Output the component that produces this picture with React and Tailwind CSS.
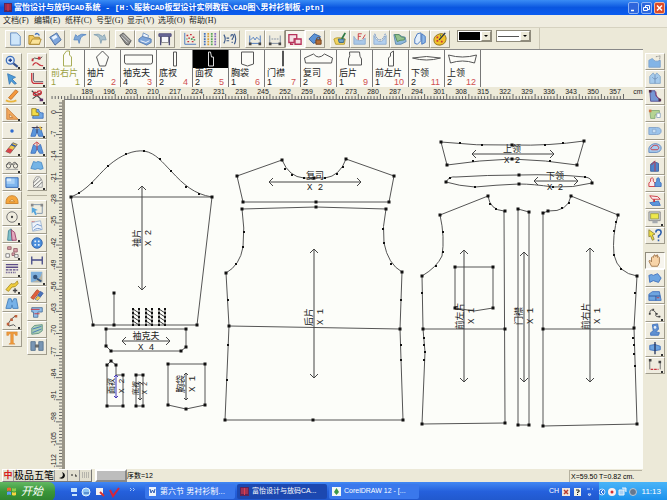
import { clsx } from 'clsx';

const B = '#3f70bd'; // outline blue
const L = '#8db8e8'; // fill blue
const K = '#444';
const R = '#c8323c';

const ICONS = {
  new: <path d="M3 1h7l4 4v10H3z" fill="#cfe6fa" stroke="#5b87c0" />,
  open: (
    <>
      <path d="M1 14V4h5l1 2h6v8z" fill="#f0c860" stroke="#a8842c" />
      <path d="M2 14l3-6h10l-2 6z" fill="#fbe49a" stroke="#a8842c" />
      <path d="M8 3q3-3 5 1" fill="none" stroke={B} strokeWidth="1.5" />
    </>
  ),
  save: (
    <>
      <path d="M2 6l8-5 5 8-7 6z" fill="#7fa6dc" stroke="#44679c" />
      <path d="M4 6l5-3 2 3-5 3z" fill="#e8f2fc" />
    </>
  ),
  undo: <path d="M1 9l2-6 2 2q5-4 10-2-6 1-7 6l-1 4-1-4z" fill="#7fa8d8" stroke="#5f8bc2" />,
  redo: <path d="M15 9l-2-6-2 2Q6 1 1 3q6 1 7 6l1 4 1-4z" fill="#a9c0cc" stroke="#86a2b2" />,
  mouse: (
    <>
      <path d="M2 4l4-3 9 9-3 5-3-1z" fill="#8a8a88" stroke="#555" />
      <path d="M4 5l7 7M6 3l7 7" stroke="#ddd" />
    </>
  ),
  printer: (
    <>
      <path d="M6 1l6 3-1 4-6-2z" fill="#eef5fd" stroke="#6c8fbd" />
      <path d="M1 8l4-3 10 3v4l-5 3-9-4z" fill="#7da5da" stroke="#5579ad" />
      <path d="M3 10l6 2 4-2" stroke="#fff" fill="none" />
    </>
  ),
  plotter: (
    <>
      <path d="M4 4h8v8H4z" fill="#f7f7fb" stroke="#888" />
      <path d="M1 2h14v3H1z" fill="#6b6a9a" stroke="#4d4c78" />
      <path d="M3 5v10M13 5v10" stroke="#4d4c78" strokeWidth="1.5" />
    </>
  ),
  scatter: (
    <>
      <path d="M2 1v13h13" fill="none" stroke={B} />
      <path d="M4 4h2M8 3h2M6 7h2M11 6h2M5 11h2M10 11h2" stroke={R} strokeWidth="1.5" />
      <path d="M9 8h2M12 9h2M4 8h1" stroke="#2f8a4a" strokeWidth="1.5" />
    </>
  ),
  grid: (
    <g fill="none" strokeWidth="2" strokeDasharray="2 1">
      <path d="M2 1v14" stroke={B} />
      <path d="M6 1v14" stroke="#d8a13a" />
      <path d="M10 1v14" stroke="#57a457" />
      <path d="M14 1v14" stroke="#8a6cc0" />
    </g>
  ),
  formula: (
    <g fill="none" stroke="#3c5888" strokeWidth="1.3">
      <path d="M1 3q3 5 0 10M4 7h3M4 10h3M13 2q3 6 0 12" />
      <path d="M9 5q0-2 1.5-2t1.5 2q0 1-1.5 3v1M10.500 11v1.5" />
    </g>
  ),
  measureA: (
    <>
      <path d="M2 4v9h12V4" fill="none" stroke={B} />
      <path d="M3 9l3-3 2 3 2-3 3 3" fill="none" stroke={B} />
      <path d="M1 12h3v3H1zM12 12h3v3h-3z" fill={K} />
    </>
  ),
  measureB: (
    <>
      <path d="M2 4v9M14 4v9M3 13h10" fill="none" stroke="#75859c" />
      <path d="M4 8h8" stroke="#75859c" strokeDasharray="2 1" />
      <path d="M1 12h3v3H1zM12 12h3v3h-3z" fill={K} />
    </>
  ),
  pieces: (
    <g fill="#f6dfe4" stroke="#b8325a" strokeWidth="1.5">
      <path d="M1 3h9v5H7v4H1z" />
      <path d="M8 8h7v6H8z" />
      <path d="M3 12v2h3" fill="none" />
    </g>
  ),
  lock: (
    <>
      <path d="M1 8l6-6 7 3-2 6-6 2z" fill="#5c93d6" stroke="#2d5c9c" />
      <path d="M9 9h6v5H9z" fill="#b5713a" stroke="#6e3f18" />
      <path d="M10 9V7q2-2 4 0v2" fill="none" stroke="#6e3f18" />
    </>
  ),
  bucket: (
    <>
      <path d="M1 8q4-3 13 0l-1 6H3z" fill="#f2d460" stroke="#b59a30" />
      <path d="M6 8h7l-1 4H7z" fill="#6fa2c8" stroke="#34658c" />
      <path d="M10 8l4-7" stroke="#2f7a46" strokeWidth="2" />
    </>
  ),
  curveF: (
    <>
      <path d="M1 5q2 5 6 5t7-3v7H1z" fill="#a9c8e8" stroke="#8faccf" />
      <path d="M6 9V2h4M6 5h3M11 8l3-5" fill="none" stroke={R} />
    </>
  ),
  curveU: (
    <>
      <path d="M1 4q3 7 7 7t7-7v10H1z" fill="#b3d0ef" stroke="#8faccf" />
      <path d="M2 2q2 7 6 7t6-7" fill="none" stroke={B} strokeDasharray="2 1" />
    </>
  ),
  clouds: (
    <>
      <path d="M1 3h6q3 3 7 3l1 5-6 3H3z" fill="#8fb8dc" stroke="#5d87ab" />
      <path d="M2 3h5q2 4 6 3v3q-6 0-8 2z" fill="#94c28e" stroke="#55895a" />
    </>
  ),
  mirror: (
    <>
      <path d="M2 8l3-6 4-1v9l-4 4-3-1z" fill="#e4effb" stroke={B} />
      <path d="M10 2l4 3v7l-4 2z" fill={L} stroke={B} />
    </>
  ),
  palette: (
    <>
      <path d="M8 2q6-1 7 5 0 7-7 8-7 0-7-6 0-5 7-7z" fill="#f0c22c" stroke="#8b6f20" />
      <path d="M4 6h2M4 10h2M9 11h2" stroke={R} strokeWidth="2" />
      <path d="M7 9l7-8" stroke="#22304c" strokeWidth="1.5" />
      <path d="M8 4h1" stroke="#308040" strokeWidth="2" />
    </>
  ),
  zoom: (
    <>
      <circle cx="6" cy="6" r="4.5" fill="#dbe9fa" stroke={B} strokeWidth="1.5" />
      <path d="M4 6h4M6 4v4" stroke="#1d3c86" strokeWidth="1.5" />
      <path d="M9.500 9.500l5 4" stroke="#34508c" strokeWidth="2.5" />
    </>
  ),
  pointer: <path d="M3 2l9 4-4 2 5 5-2 1-4-4-2 4z" fill="#4d9cd8" stroke="#3a7ab8" />,
  pencil: (
    <>
      <path d="M4 10L12 1l3 2-8 9z" fill="#f5973a" stroke="#c0742c" />
      <path d="M1 13q6 3 12 0" stroke="#e9b43c" strokeWidth="2" fill="none" />
    </>
  ),
  triangle: (
    <>
      <path d="M2 1v13h13z" fill="#f2a85c" stroke="#c88040" />
      <path d="M5 8v4h4z" fill="#ece9d8" stroke="#c88040" />
    </>
  ),
  point: <circle cx="8" cy="8" r="2" fill="#2d6ad0" />,
  eraser: (
    <>
      <path d="M1 12l8-10 5 2-8 10z" fill="#f2c94a" stroke="#666" />
      <path d="M1 12l3-4 5 2-3 4z" fill="#d8444c" />
      <path d="M7 4l5 2" stroke="#345aa8" strokeWidth="2" />
    </>
  ),
  glasses: (
    <g fill="none" stroke="#555">
      <path d="M2 8q2-5 5-2l1 2 1-2q3-3 5 2" />
      <circle cx="4" cy="9" r="2.5" />
      <circle cx="12" cy="9" r="2.5" />
      <path d="M1 13h14" stroke="#999" />
    </g>
  ),
  rect: (
    <>
      <path d="M1 2h14v11H1z" fill="#7fb6ee" stroke="#2a5fae" />
      <path d="M2 3h9v6H2z" fill="#a9d0f5" />
      <path d="M2 3h5v3H2z" fill="#d8ebfc" />
    </>
  ),
  protractor: (
    <>
      <path d="M1 12q0-9 7-9t7 9z" fill="#f5a63c" stroke="#c8802c" />
      <path d="M5 10q3-5 6 0z" fill="#fbe4b8" stroke="#c8802c" />
    </>
  ),
  circle: (
    <>
      <circle cx="8" cy="8" r="6" fill="none" stroke="#666" />
      <circle cx="8" cy="8" r="1.3" fill={K} />
    </>
  ),
  skirt: (
    <>
      <path d="M4 3l3-2 2 8v5H3z" fill="#7fc0c8" stroke="#458698" />
      <path d="M7 2l4 3 2 9H8z" fill="#e4a8bc" stroke="#963a66" />
    </>
  ),
  squares: (
    <>
      <path d="M3 2h4v3H3zM10 4h4v4h-4zM8 9h3v3H8z" fill="#d8a0a8" stroke="#95606a" />
      <path d="M1 10h4v4H1zM11 11h4v3h-4z" fill="#fff" stroke="#777" />
    </>
  ),
  lines: (
    <g stroke="#5d4d88" strokeWidth="1.5">
      <path d="M1 3h14M1 6h14" />
      <path d="M1 9h14" strokeDasharray="3 1" />
      <path d="M1 12h11" strokeDasharray="1 1" />
    </g>
  ),
  tape: (
    <>
      <path d="M1 11l6-7q4 2 7-3l1 3q-3 5-7 4l-4 5z" fill="#f0cd3c" stroke="#ac902c" />
      <path d="M9 12h5M11.500 9.500v5" stroke={K} strokeWidth="1.5" />
    </>
  ),
  pants: <path d="M1 13L4 2h3l1 4 2-4h3l2 11H9L8 9l-1 4z" fill="#77b2e8" stroke="#437eba" />,
  pen: (
    <>
      <path d="M12 2L7 6l-4 6q1 3 4 1t5 1" fill="none" stroke={K} />
      <path d="M6 5h3v3H6zM2 10h3v3H2zM11 1h3v3h-3z" fill="#c0603c" />
    </>
  ),
  text: <path d="M2 1h12v4h-2l-1-2H9.500v10l2 2h-7l2-2V3H5L4 5H2z" fill="#ef9a3c" stroke="#d08030" strokeWidth=".5" />,
  wave: (
    <>
      <path d="M2 6q3-4 6-2t6-2" fill="none" stroke={K} />
      <path d="M3 12q3-5 6-2t6 2" fill="none" stroke={R} strokeWidth="1.3" />
      <path d="M9 2h3v3H9zM2 4h2v3H2z" fill={R} />
    </>
  ),
  corner: (
    <>
      <path d="M2 1v8q0 4 4 4h9" fill="none" stroke={R} strokeWidth="1.5" />
      <path d="M4 1v8q0 2 2 2h9" fill="none" stroke="#556" />
    </>
  ),
  scissors: (
    <>
      <path d="M2 2l11 10M3 11l10-7" stroke="#444" strokeWidth="1.3" />
      <path d="M8 3q5-2 5 1t-5 3q-5 1-4-2t8 1" fill="none" stroke={R} strokeWidth="1.5" />
      <path d="M11 11h4v3h-4z" fill="#5a2d68" />
    </>
  ),
  notchA: (
    <>
      <path d="M5 4h5q0 4 5 4v6H3z" fill="#6fa6e4" stroke={B} />
      <path d="M2 3h5v4l3 1v3H2z" fill="#f3dc48" stroke="#96802c" />
    </>
  ),
  notchB: (
    <>
      <path d="M1 14L4 4l4 3 4-3 3 10h-5L8 9l-2 5z" fill="#5a96dc" stroke={B} />
      <path d="M2 4h12M8 2v8" stroke="#38304c" />
      <path d="M11 3l2 4" stroke="#e2b43a" strokeWidth="2" />
    </>
  ),
  notchC: (
    <>
      <path d="M1 14L4 4l4 3 4-3 3 10h-4L8 9l-2 5z" fill="#5a96dc" stroke={B} />
      <path d="M4 4l4-3 3 3M8 2v8" stroke={R} fill="none" />
    </>
  ),
  pleat: <path d="M1 12L4 4l3 1 2-1 4 1 2 7-3 1-3-1-3 1z" fill="#74b4e6" stroke="#4a89c4" />,
  hatch: (
    <>
      <path d="M4 14V7l3-5h4l3 5v7z" fill="#f3f3ee" stroke="#999" />
      <path d="M4 9l6-6M4 13l9-8M8 14l6-6" stroke="#666" />
    </>
  ),
  frame: (
    <>
      <path d="M2 3h12v10H8" fill="none" stroke="#7a90a8" />
      <path d="M1 2h3v3H1zM12 2h3v3h-3z" fill="#888" />
      <path d="M2 6l7 3-3 1 2 4-2 1-2-4-2 2z" fill="#57a6dc" />
    </>
  ),
  patch: (
    <>
      <path d="M2 4l10-2 2 10-11 2z" fill="#eef3fa" stroke="#a0b6d0" />
      <path d="M4 10l4-4 5 2M4 13q5-4 9-1" fill="none" stroke="#6a92cc" />
      <path d="M2 3h4" stroke={R} strokeDasharray="1 1" />
    </>
  ),
  button: (
    <>
      <circle cx="8" cy="8" r="6" fill="#4a8edc" stroke="#2f5fa8" />
      <path d="M5 5h2v2H5zM9 5h2v2H9zM5 9h2v2H5zM9 9h2v2H9z" fill="#e6f1fc" />
    </>
  ),
  dart: (
    <g stroke="#464a88" strokeWidth="1.5">
      <path d="M2 4v9M14 4v9M2 8h12" />
    </g>
  ),
  camera: (
    <>
      <path d="M1 2h13v12H1z" fill="#7fb0dc" />
      <path d="M14 2Q12 13 1 14h13z" fill="#b9b4a2" />
      <circle cx="6" cy="8" r="2.5" fill="#34547c" />
      <path d="M8 10l5 3" stroke="#34547c" strokeWidth="2" />
    </>
  ),
  crayons: (
    <>
      <path d="M1 11l7-9 3 2-7 9z" fill="#e2603c" stroke="#b05030" />
      <path d="M6 13l6-9 3 2-6 8z" fill="#4a74bc" stroke="#3c5ca0" />
      <path d="M6 13l3-4 3 2-3 3z" fill="#f0cb50" />
    </>
  ),
  fold: (
    <>
      <path d="M2 3h12v5H9v6H4V8H2z" fill="#8fbbe8" stroke="#50749c" />
      <path d="M1 5h10M5 10h6" stroke={R} />
    </>
  ),
  seam: (
    <>
      <path d="M2 7l3-3 9-1v7l-4 3-8 1z" fill="#a9cfb4" stroke="#5f9080" />
      <path d="M3 8l10-3M3 12l10-4" stroke={B} />
    </>
  ),
  join: (
    <>
      <path d="M1 3h5v10H1zM10 3h5v10h-5z" fill="#7996b4" stroke="#5a7690" />
      <path d="M6 8h4M7 6v4M9 6v4" stroke={K} />
    </>
  ),
  sleeveCut: (
    <>
      <path d="M1 6l4-2q3 5 9 2v8H1z" fill="#82b4e6" stroke="#7fa4cc" />
      <path d="M9 2l5-1-1 5" fill="none" stroke="#666" strokeDasharray="1 1" />
    </>
  ),
  vest: (
    <>
      <path d="M2 5l4-4 2 3 2-3 4 4v8H2z" fill="#a6cbec" stroke="#84a6c8" />
      <path d="M8 4v9M5 6q3 4 6 0" fill="none" stroke="#6f90b8" />
    </>
  ),
  boot: (
    <>
      <path d="M2 2h6l1 6 5 4v2H3z" fill="#7696d4" stroke="#544c90" />
      <path d="M9 3q0 7 5 9" fill="none" stroke="#8c3468" />
      <path d="M1 1h3v3H1zM12 11h3v3h-3z" fill="#553048" />
    </>
  ),
  green: (
    <>
      <path d="M2 4h11v5H8v4H3z" fill="#b5d493" stroke="#86ac78" />
      <path d="M10 7h4v5h-4z" fill="#fff" stroke="#90a8c0" />
      <path d="M1 3h3v3H1z" fill="#d0784c" />
    </>
  ),
  tag: (
    <>
      <path d="M1 4h9q5 0 5 4t-5 4H1z" fill="#9cc4ec" stroke="#7fa0c8" />
      <path d="M5 6h4v4H5z" fill="#c8dff5" stroke="#8dacd0" />
    </>
  ),
  tagRed: (
    <>
      <path d="M1 8q2-5 8-5 6 1 6 5t-5 5H1z" fill="#a9cdf0" stroke="#5b83bc" />
      <path d="M3 9q2-5 7-4 4 2 1 5H4z" fill="none" stroke={R} />
    </>
  ),
  bodice: (
    <>
      <path d="M3 14V6l4-3 5 2v9z" fill="#4e84cc" stroke="#3860a0" />
      <path d="M8 3v11M4 7l4-5" stroke={R} />
    </>
  ),
  twins: (
    <>
      <path d="M1 12V8l2-2V3q2-2 3 0v3l2 2v4z" fill="#fbeaec" stroke={R} />
      <path d="M8 12V8l2-2V3q2-2 3 0v3l2 2v4z" fill="#5c98dc" stroke={B} />
    </>
  ),
  swap: (
    <>
      <path d="M2 2l9 1 3 3H5z" fill="#fbeaec" stroke={R} />
      <path d="M2 10l10-2 2 5H5z" fill="#5c98dc" stroke={B} />
      <path d="M7 6v3" stroke={R} strokeWidth="2" />
    </>
  ),
  monitor: (
    <>
      <path d="M1 1h13v10H1z" fill="#c9cfd4" stroke="#888" />
      <path d="M3 3h9v6H3z" fill="#eee84a" stroke="#a0a048" />
      <path d="M5 11h6v3H5z" fill="#a5aab0" />
    </>
  ),
  help: (
    <>
      <path d="M1 2l7 5-3 1 2 5-2 1-2-5-2 1z" fill="#f0e03c" stroke="#8e8440" />
      <path d="M9 5q0-3 3-3t3 3q0 2-3 4v2M12 13v2" fill="none" stroke="#2c5fae" strokeWidth="1.8" />
    </>
  ),
  hand: (
    <path
      d="M4 14L1 8l1-1 2 2V4l1-1 1 1 1-3h1l1 2 1-2h1v3l1-1 1 1v6l-2 4z"
      fill="#f8d4a8"
      stroke="#a07448"
    />
  ),
  bone: <path d="M1 5l3-1 2 1 5-2 4 5-3 5-6-2-4 2z" fill="#6ea5e0" stroke={B} />,
  box: (
    <>
      <path d="M1 13V6l4-3h8l2 10z" fill="#6ea5e0" stroke={B} />
      <path d="M1 8h13M9 8v5" stroke="#2f5698" />
      <path d="M10 10h3" stroke={R} />
    </>
  ),
  curvePts: (
    <>
      <path d="M2 9q0-6 4-4t3 5 5 2" fill="none" stroke={K} />
      <path d="M1 8h2v2H1zM5 3h2v2H5zM9 8h2v2H9zM12 11h2v2h-2z" fill={K} />
    </>
  ),
  rotate: (
    <>
      <path d="M5 2l6-1 1 6-3 3 4 1-1 3H3v-3l3-2z" fill="#6090d0" stroke={B} />
      <circle cx="8" cy="5" r="1.5" fill="#e7f0fb" />
    </>
  ),
  cross: (
    <>
      <path d="M2 5l6-1 6 2v4l-6 1-6-1z" fill="#6ea5e0" stroke={B} />
      <path d="M8 1v14" stroke="#24335c" strokeWidth="1.5" />
    </>
  ),
  angle: (
    <>
      <path d="M2 2v11M14 4v9" fill="none" stroke="#666" />
      <path d="M3 13h9" stroke={R} strokeWidth="1.5" strokeDasharray="3 1" />
      <path d="M1 1h3v3H1zM12 3h3v3h-3z" fill={K} />
    </>
  ),
};

const MENUS = ['文档(F)', '编辑(E)', '纸样(C)', '号型(G)', '显示(V)', '选项(O)', '帮助(H)'];

const TOP_GROUPS = [
  ['new', 'open', 'save'],
  ['undo', 'redo'],
  ['mouse', 'printer', 'plotter'],
  ['scatter', 'grid', 'formula'],
  ['measureA', 'measureB', 'pieces', 'lock'],
  ['bucket', 'curveF', 'curveU', 'clouds', 'mirror', 'palette'],
];

const LEFT_A = [
  'zoom', 'pointer', 'pencil', 'triangle', 'point', 'eraser', 'glasses', 'rect', 'protractor',
  'circle', 'skirt', 'squares', 'lines', 'tape', 'pants', 'pen', 'text',
];
const LEFT_B1 = ['wave', 'corner', 'scissors', 'notchA', 'notchB', 'notchC', 'pleat', 'hatch'];
const LEFT_B2 = ['frame', 'patch', 'button', 'dart', 'camera', 'crayons', 'fold', 'seam', 'join'];
const RIGHT_A = [
  'sleeveCut', 'vest', 'boot', 'green', 'tag', 'tagRed', 'bodice', 'twins', 'swap', 'monitor', 'help',
];
const RIGHT_B = ['hand', 'bone', 'box', 'curvePts', 'rotate', 'cross', 'angle'];

// tools that open a fly-out
const FLYOUT = new Set([
  'zoom', 'triangle', 'eraser', 'glasses', 'rect', 'circle', 'skirt', 'squares', 'lines', 'tape',
  'pen', 'wave', 'corner', 'scissors', 'notchB', 'notchC', 'hatch', 'camera', 'monitor',
  'curvePts', 'cross', 'angle',
]);

const PIECES = [
  { name: '前右片', count: 1, d: 'M14 16V5l3-4h3v4l2 2v9z' },
  { name: '袖片', count: 2, d: 'M11 7l6-6 6 6-3 9h-6z' },
  { name: '袖克夫', count: 4, d: 'M3 5h28v7q0 2-2 2H5q-2 0-2-2z' },
  { name: '底衩', count: 2, d: 'M16 2h3v14h-3z' },
  { name: '面衩', count: 2, d: 'M15 2h2l1 5h2v9h-5z' },
  { name: '胸袋', count: 1, d: 'M12 2h12v12l-6 2-6-2z' },
  { name: '门襟', count: 1, d: 'M17 1h1v15h-1z' },
  { name: '复司', count: 2, d: 'M3 8l9-4q5 6 11 0l8 4-1 5H4z' },
  { name: '后片', count: 1, d: 'M12 2h10q0 5 2 7v6H11V9q2-3 1-7z' },
  { name: '前左片', count: 1, d: 'M15 16V8l2-2V3l3-2v15z' },
  { name: '下领', count: 2, d: 'M3 8q14-3 28 0-14 4-28 0z' },
  { name: '上领', count: 2, d: 'M3 5q14 4 28 0l-2 8q-12-4-24 0z' },
];

function Icon({ name }) {
  return (
    <svg viewBox="0 0 16 16" className="h-3.5 w-4" fill="none" aria-hidden="true">
      {ICONS[name]}
    </svg>
  );
}

function ToolButton({ name, pressed, className }) {
  return (
    <button
      type="button"
      aria-label={name}
      className={clsx(
        'flex items-center justify-center border',
        pressed
          ? 'border-t-[#8f8b7c] border-l-[#8f8b7c] border-r-white border-b-white bg-[#f7f5ee]'
          : 'border-t-white border-l-white border-r-[#a09c8c] border-b-[#a09c8c] bg-[#efecdf]',
        className,
      )}
    >
      <Icon name={name} />
      {FLYOUT.has(name) && <span className="-ml-0.5 h-0.5 w-0.5 self-end bg-[#333]" />}
    </button>
  );
}

function ToolColumn({ names, className }) {
  return (
    <div className={clsx('flex w-5 flex-col', className)}>
      {names.map((n) => (
        <ToolButton key={n} name={n} pressed={n === 'hand'} className="min-h-0 flex-1" />
      ))}
    </div>
  );
}

function DropArrow() {
  return (
    <span className="flex w-2.5 items-center justify-center border border-t-white border-l-white border-r-[#8f8b7c] border-b-[#8f8b7c] bg-[#ece9d8]">
      <svg viewBox="0 0 4 2" className="h-0.5 w-1" aria-hidden="true">
        <path d="M0 0h4L2 2z" fill="#000" />
      </svg>
    </span>
  );
}

function PieceCell({ piece, index }) {
  const selected = index === 4;
  const placed = index === 0;
  return (
    <div
      className={clsx(
        'flex w-9 flex-col border-r border-[#777]',
        placed ? 'text-[#9aa040]' : 'text-[#222]',
      )}
    >
      <svg
        viewBox="0 0 34 18"
        className={clsx('h-[18px] w-full', selected && 'bg-black')}
        aria-hidden="true"
      >
        <path
          d={piece.d}
          fill="none"
          stroke={placed ? '#a8ad58' : selected ? '#ddd' : '#555'}
          strokeWidth="1"
        />
      </svg>
      <span className="pl-0.5 text-[9px] leading-[11px]">{piece.name}</span>
      <span className="flex justify-between pr-1 pl-0.5 text-[9px] leading-[7px]">
        <span>{piece.count}</span>
        <span className={placed ? '' : 'text-[#d05050]'}>{index + 1}</span>
      </span>
    </div>
  );
}

const CM = 22.1 / 7;

function TopRuler() {
  const ticks = Array.from({ length: 182 }, (_, i) => i);
  return (
    <svg className="h-[13px] w-full" aria-hidden="true">
      {ticks.map((i) => {
        const x = 22 + (i - 6) * CM;
        return (
          <path key={i} d={`M${x} 12V${(i - 6) % 7 === 0 ? 7 : 9}`} stroke="#666" strokeWidth="1" />
        );
      })}
      {Array.from({ length: 25 }, (_, i) => (
        <text key={i} x={38 + i * 22} y="7" textAnchor="middle" fontSize="7" fill="#222">
          {189 + i * 7}
        </text>
      ))}
      <text x="589" y="7" textAnchor="middle" fontSize="7" fill="#222">
        cm
      </text>
      <path d="M15 12.500H594" stroke="#777" />
    </svg>
  );
}

function SideRuler() {
  return (
    <svg className="min-h-[369px] w-full flex-1" aria-hidden="true">
      {Array.from({ length: 118 }, (_, i) => {
        const y = 3 + i * CM;
        return <path key={i} d={`M13 ${y}H${(i - 3) % 7 === 0 ? 7 : 10}`} stroke="#666" />;
      })}
      {Array.from({ length: 17 }, (_, i) => (
        <text
          key={i}
          transform={`translate(7 ${12 + i * 21.8}) rotate(-90)`}
          textAnchor="middle"
          fontSize="7"
          fill="#222"
        >
          {i === 0 ? '0' : `-${i * 7}`}
        </text>
      ))}
    </svg>
  );
}

function Dots({ points, size = 3 }) {
  return points.map(([x, y]) => (
    <rect key={`${x}-${y}`} x={x - size / 2} y={y - size / 2} width={size} height={size} fill="#111" />
  ));
}

// grain line with open arrow heads at both ends
function Grain({ x1, y1, x2, y2, color = '#444', head = 4 }) {
  const d =
    x1 === x2
      ? `M${x1} ${y1}V${y2}M${x1 - head} ${y1 + head}L${x1} ${y1}l${head} ${head}M${x1 - head} ${y2 - head}L${x1} ${y2}l${head} ${-head}`
      : `M${x1} ${y1}H${x2}M${x1 + head} ${y1 - head}L${x1} ${y1}l${head} ${head}M${x2 - head} ${y1 - head}L${x2} ${y1}l${-head} ${head}`;
  return <path d={d} fill="none" stroke={color} />;
}

function Tag({ x, y, name, count, vertical, size = 9, gap = 11 }) {
  return (
    <g
      transform={`translate(${x} ${y})${vertical ? ' rotate(-90)' : ''}`}
      textAnchor="middle"
      fontSize={size}
      fill="#222"
    >
      <text y="-2">{name}</text>
      <text y={gap - 2}>X {count}</text>
    </g>
  );
}

const OUTLINES = [
  // sleeve
  'M71 197C88 190 96 177 108 166C122 154 134 150 144 151C156 153 163 163 171 171C184 185 194 194 212 197L197 325H93zM71 197H212M114 293V325',
  // cuff
  'M106 329H186V347L181 351H111L106 346z',
  // plackets
  'M107 365L111 361L116 365V375H123V406H107zM136 375H143V406H136z',
  // pocket
  'M168 364H205V405L186 409L168 405z',
  // yoke
  'M237 176L282 160Q289 177 304 178H325Q340 176 346 159L394 176L389 202H243z',
  // back
  'M242 209L316 207L386 209Q382 227 384 243Q388 264 402 272L400 329L403 420H225L229 326L226 273Q240 265 243 247Q245 228 242 209M229 326L400 329',
  // collar
  'M441 142Q477 146 512 145Q550 146 584 141L577 165Q546 160 512 159Q480 160 447 165z',
  // collar stand
  'M446 182Q449 176 456 177Q487 175 519 175Q556 174 585 177Q592 178 592 183Q573 188 553 187Q533 184 519 184Q495 185 475 187Q459 186 446 182z',
  // front left
  'M440 215L488 196Q490 210 504 211L505 423L422 424L425 352L423 329L422 276Q437 267 442 256Q445 237 440 215M423 329H505',
  'M455 267H493V308L474 311L455 308z',
  // front band
  'M518 209L529 212V425H518z',
  // front right
  'M543 213L548 211Q568 212 571 196L618 215Q612 236 614 255Q618 273 637 276L634 328L637 424L543 426zM543 329H634',
];

const NODES = [
  [71, 197], [212, 197], [93, 325], [197, 325], [114, 293], [114, 325], [106, 329], [186, 329],
  [186, 347], [181, 351], [111, 351], [106, 346], [107, 365], [111, 361], [116, 365], [123, 375],
  [123, 406], [107, 406], [136, 375], [143, 375], [136, 406], [143, 406], [168, 364], [205, 364],
  [205, 405], [186, 409], [168, 405], [237, 176], [282, 160], [346, 159], [394, 176], [389, 202],
  [243, 202], [316, 202], [242, 209], [316, 207], [386, 209], [402, 272], [400, 329], [403, 420],
  [225, 420], [229, 326], [226, 273], [441, 142], [584, 141], [577, 165], [447, 165], [512, 145],
  [512, 159], [446, 182], [592, 183], [519, 175], [519, 184], [440, 215], [488, 196], [505, 211],
  [505, 423], [422, 424], [423, 329], [422, 276], [455, 267], [493, 267], [493, 308], [455, 308],
  [518, 209], [529, 212], [529, 425], [518, 425], [543, 213], [548, 211], [571, 196], [618, 215],
  [637, 276], [634, 328], [637, 424], [543, 426], [314, 178], [313, 420], [505, 329], [543, 329],
];

const SMALL_NODES = [
  [79, 193], [92, 183], [108, 166], [126, 154], [144, 151], [160, 159], [171, 171], [186, 187],
  [199, 194], [285, 169], [292, 175], [304, 178], [325, 178], [337, 174], [343, 167], [244, 232],
  [243, 247], [236, 264], [384, 243], [383, 229], [391, 264], [228, 300], [227, 380], [401, 300],
  [401, 360], [401, 345], [228, 345], [460, 143], [482, 145], [545, 145], [563, 143], [473, 161],
  [550, 161], [450, 178], [475, 187], [553, 187], [585, 177], [490, 204], [496, 209], [443, 232],
  [443, 252], [436, 266], [424, 345], [425, 352], [424, 360], [424, 338], [422, 293], [614, 231],
  [614, 255], [621, 269], [635, 293], [633, 338], [634, 345], [634, 354], [635, 366], [562, 208],
  [569, 203], [616, 222],
];

function PatternCanvas() {
  return (
    <svg
      className="min-h-[369px] w-full flex-1"
      role="img"
      aria-label="男衬衫制板"
      fontFamily="'Liberation Mono','Noto Sans CJK SC',monospace"
    >
      <g transform="translate(-65 -100)">
        {OUTLINES.map((d) => (
          <path key={d} d={d} fill="none" stroke="#555" strokeWidth="1" />
        ))}
        <Dots points={NODES} />
        <Dots points={SMALL_NODES} size={2} />
        {[132, 145, 158].map((x) => (
          <g key={x}>
            <path
              d={`M${x + 1} 309V325M${x + 7} 309V325M${x + 1} 309l6 4M${x + 1} 313l6 4M${x + 1} 317l6 4M${x + 1} 321l6 4`}
              stroke="#333"
            />
            <Dots
              size={2}
              points={[309, 313, 317, 321, 325].flatMap((y) => [[x + 1, y], [x + 7, y]])}
            />
          </g>
        ))}

        <Grain x1={142} y1={186} x2={142} y2={290} />
        <Grain x1={122} y1={341} x2={170} y2={341} />
        <Grain x1={116} y1={375} x2={116} y2={398} color="#4438b8" head={2} />
        <Grain x1={140} y1={382} x2={140} y2={400} head={2} />
        <Grain x1={186} y1={373} x2={186} y2={400} head={2} />
        <Grain x1={269} y1={182} x2={361} y2={182} />
        <Grain x1={314} y1={249} x2={314} y2={378} />
        <Grain x1={472} y1={154} x2={554} y2={154} />
        <Grain x1={534} y1={181} x2={578} y2={181} />
        <Grain x1={464} y1={250} x2={464} y2={382} />
        <Grain x1={524} y1={252} x2={524} y2={382} />
        <Grain x1={590} y1={248} x2={590} y2={382} />

        <Tag x={142} y={238} name="袖片" count={2} vertical />
        <Tag x={146} y={341} name="袖克夫" count={4} />
        <Tag x={116} y={386} name="面衩" count={2} vertical size={8} gap={10} />
        <Tag x={140} y={388} name="底衩" count={2} vertical size={7} gap={9} />
        <Tag x={186} y={384} name="胸袋" count={1} vertical />
        <Tag x={315} y={181} name="复司" count={2} />
        <Tag x={314} y={317} name="后片" count={1} vertical />
        <Tag x={512} y={154} name="上领" count={2} />
        <Tag x={555} y={181} name="下领" count={2} />
        <Tag x={465} y={316} name="前左片" count={1} vertical />
        <Tag x={524} y={316} name="门襟" count={1} vertical />
        <Tag x={591} y={316} name="前右片" count={1} vertical />
      </g>
    </svg>
  );
}

function TitleBar() {
  return (
    <header className="flex h-[15px] items-center bg-linear-to-b from-[#3a8cf5] via-[#0a56e0] to-[#0a5cf0] px-1 text-white">
      <svg viewBox="0 0 8 9" className="h-[9px] w-2" aria-hidden="true">
        <path d="M0 0h8v9H0z" fill="#5c2458" />
        <path d="M1 2h6M1 4h6M1 6h6M4 1v7" stroke="#d83848" />
      </svg>
      <h1 className="ml-0.5 flex-1 text-[8px] leading-3 font-bold whitespace-pre [font-family:'Liberation_Mono','Noto_Sans_CJK_SC',monospace]">
        {'富怡设计与放码CAD系统 - [H:\\服装CAD板型设计实例教程\\CAD图\\男衬衫制板.ptn]'}
      </h1>
      <div className="-mr-1 flex gap-0.5">
        <button type="button" aria-label="最小化" className="h-3 w-[11px] rounded-xs border border-[#8fb4f4] bg-[#2e66dc]">
          <svg viewBox="0 0 9 10" className="h-full w-full"><path d="M2 7.500h3" stroke="#fff" strokeWidth="1.5" /></svg>
        </button>
        <button type="button" aria-label="还原" className="h-3 w-[11px] rounded-xs border border-[#8fb4f4] bg-[#2e66dc]">
          <svg viewBox="0 0 9 10" className="h-full w-full" fill="none" stroke="#fff"><path d="M3.500 4V2.500h4v4H6M1.500 4.500h4v3h-4z" /></svg>
        </button>
        <button type="button" aria-label="关闭" className="mr-0.5 h-3 w-[11px] rounded-xs border border-[#f0b8a0] bg-[#dc4a28]">
          <svg viewBox="0 0 9 10" className="h-full w-full"><path d="M2 2.500l5 5M7 2.500l-5 5" stroke="#fff" strokeWidth="1.5" /></svg>
        </button>
      </div>
    </header>
  );
}

function Toolbar() {
  return (
    <div className="flex h-[22px] items-center border-t border-[#d6d2c0] pl-[5px]">
      <div className="flex gap-[5px]">
        {TOP_GROUPS.map((group) => (
          <div key={group[0]} className="flex">
            {group.map((n) => (
              <ToolButton key={n} name={n} pressed={n === 'pieces'} className="h-[18px] w-5" />
            ))}
          </div>
        ))}
      </div>
      <div className="ml-[7px] flex gap-1 self-start pt-0.5">
        <label className="flex h-3 w-[35px] border border-[#8f8b7c] bg-white">
          <select aria-label="颜色" className="m-px min-w-0 flex-1 appearance-none bg-black" />
          <DropArrow />
        </label>
        <label className="flex h-3 w-[35px] border border-[#8f8b7c] bg-white">
          <select
            aria-label="线型"
            className="m-px min-w-0 flex-1 appearance-none bg-[linear-gradient(#555,#555)] bg-[length:100%_1px] bg-center bg-no-repeat"
          />
          <DropArrow />
        </label>
      </div>
      <div className="ml-2 h-full border-l border-[#cbc7b5]" />
    </div>
  );
}

function StatusBar() {
  return (
    <div className="flex h-[13px] items-center bg-[#ece9d8] text-[7px] leading-3">
      <div className="ml-0.5 flex h-[13px] items-center border border-t-white border-l-white border-r-[#777] border-b-[#777] bg-[#e2dfd0]">
        <span className="w-2.5 text-center text-[9px] leading-[11px] font-bold text-[#d81c1c]">中</span>
        <span className="w-[42px] border-x border-[#999] text-center text-[10px] leading-[11px]">
          极品五笔
        </span>
        <svg viewBox="0 0 36 11" className="h-[11px] w-9" aria-hidden="true">
          <path d="M7 2q3 5-3 6 5 2 6-2 0-3-3-4z" fill="#111" />
          <path d="M12.500 0v11M24.500 0v11" stroke="#999" />
          <path d="M16 5h2M20 5h1v2" stroke="#222" fill="none" />
          <path d="M27 3h8M27 5h8M27 7h8" stroke="#888" strokeDasharray="1 1" />
        </svg>
      </div>
      <div className="ml-[3px] h-[13px] w-8 border-2 border-t-white border-l-white border-r-[#888] border-b-[#888] bg-[#bdbdbd]" />
      <span className="flex-1 text-[7px]">序数=12</span>
      <span className="mr-[25px] w-[73px] border-t border-l border-[#b5b19f] pl-px text-[7px] leading-[11px] whitespace-nowrap">
        X=59.50 T=0.82 cm.
      </span>
    </div>
  );
}

function TaskButton({ active, icon, children }) {
  return (
    <button
      type="button"
      className={clsx(
        'flex h-[15px] w-[90px] items-center gap-[3px] rounded-xs pl-[3px] text-[8px] whitespace-nowrap text-white',
        active ? 'bg-[#1c48b0]' : 'bg-[#3a78ec]',
      )}
    >
      <svg viewBox="0 0 9 9" className="h-[9px] w-[9px] shrink-0" aria-hidden="true">
        {icon}
      </svg>
      {children}
    </button>
  );
}

function Taskbar() {
  return (
    <footer className="flex h-[19px] items-center bg-linear-to-b from-[#4288f4] via-[#2560dc] to-[#2058cc]">
      <button
        type="button"
        className="flex h-full w-[55px] items-center gap-1 rounded-r-md bg-linear-to-b from-[#62b862] via-[#3a963a] to-[#2f822f] pl-1.5 text-[11px] text-white italic"
      >
        <svg viewBox="0 0 11 11" className="h-[11px] w-[11px]" aria-hidden="true">
          <path d="M1 2q2-1 4 0v3q-2-1-4 0z" fill="#f06a30" />
          <path d="M6 2q2 1 4 0v3q-2 1-4 0z" fill="#8cd04c" />
          <path d="M1 6q2-1 4 0v3q-2-1-4 0z" fill="#5c9cf4" />
          <path d="M6 6q2 1 4 0v3q-2 1-4 0z" fill="#f8d440" />
        </svg>
        开始
      </button>
      <svg viewBox="0 0 78 12" className="ml-3 h-3 w-[78px]" fill="none" aria-hidden="true">
        <path d="M4 2h6v4H4zM5 8h5v2H5z" fill="#c8e4fa" />
        <circle cx="19" cy="6" r="4" fill="#8cc4f4" stroke="#e6f4fc" />
        <path d="M17 7h5" stroke="#2858a8" />
        <path d="M29 2h7v7h-7z" fill="#f6f2f0" />
        <path d="M33 6l4 4" stroke="#d83030" strokeWidth="2" />
        <path d="M43 4l3 6 6-8" stroke="#d82438" strokeWidth="2" />
        <path d="M63 2l1.500 1.500L63 5M66 2l1.500 1.500L66 5" stroke="#a8c8f8" />
      </svg>
      <div className="flex flex-1 gap-0.5">
        <TaskButton
          icon={
            <>
              <path d="M1 0h7v9H1z" fill="#eef4fc" />
              <path d="M2 2l1 4 1.500-3L6 6l1-4" stroke="#2c5ab0" fill="none" />
            </>
          }
        >
          第六节 男衬衫制...
        </TaskButton>
        <TaskButton
          active
          icon={
            <>
              <path d="M0 0h9v9H0z" fill="#5c2458" />
              <path d="M1 2h7M1 4h7M1 6h7M4.500 1v7" stroke="#e04050" />
            </>
          }
        >
          <span className="text-[7px]">富怡设计与放码CA...</span>
        </TaskButton>
        <TaskButton
          icon={
            <>
              <path d="M0 0h9v9H0z" fill="#f4f8f4" />
              <path d="M4.500 1L7 5 4.500 8 2 5z" fill="#3a9848" />
            </>
          }
        >
          <span className="text-[7px]">CorelDRAW 12 - [...</span>
        </TaskButton>
      </div>
      <span className="text-[7px] text-white">CH</span>
      <svg viewBox="0 0 38 12" className="ml-0.5 h-3 w-[38px]" fill="none" aria-hidden="true">
        <path d="M1 2h8v8H1z" fill="#f0e4dc" />
        <path d="M3 4l4 4M7 4L3 8" stroke="#b83c30" strokeWidth="1.5" />
        <path d="M13 2h7v8h-7z" fill="#f4f2e4" />
        <path d="M15 4h3v2h-1.500v1M16.500 8v1" stroke="#222" />
        <path d="M26 3h3M31 3h1M27 8h3l-1.500 2z" stroke="#cfe2fc" />
      </svg>
      <div className="flex h-full w-[68px] items-center justify-between bg-linear-to-b from-[#48b4f8] to-[#1890ec] pr-1.5 text-[8px] text-white">
        <svg viewBox="0 0 40 12" className="h-3 w-10" fill="none" aria-hidden="true">
          <circle cx="3" cy="6" r="3" fill="#2c78e0" stroke="#c8e4fc" />
          <path d="M4 4L2 6l2 2" stroke="#fff" />
          <circle cx="13" cy="6" r="4" fill="#fbeeee" />
          <circle cx="13" cy="6" r="1.500" fill="#d82c2c" />
          <path d="M20 4h5v5h-5zM23 2h4v4" fill="#a8d0f4" stroke="#e8f4fc" />
          <circle cx="34" cy="6" r="3.500" fill="#667890" stroke="#b8c8d8" />
        </svg>
        <span>11:13</span>
      </div>
    </footer>
  );
}

export default function App() {
  return (
    <div className="flex min-h-screen flex-col bg-[#ece9d8] text-black [font-family:'Liberation_Sans','Noto_Sans_CJK_SC',sans-serif]">
      <TitleBar />
      <nav className="flex h-3 items-center bg-[#efecdf] pl-[3px] text-[#222] [font-family:'Liberation_Serif','Noto_Sans_CJK_SC',serif]">
        {MENUS.map((m) => (
          <button key={m} type="button" className="w-[31px] text-left text-[8px] leading-3 whitespace-nowrap">
            {m}
          </button>
        ))}
      </nav>
      <Toolbar />

      <main className="flex flex-1">
        <aside className="flex w-[49px] gap-[5px] pt-1 pl-0.5">
          <ToolColumn names={LEFT_A} className="h-[294px]" />
          <div className="flex flex-col">
            <ToolColumn names={LEFT_B1} className="h-[138px]" />
            <hr className="my-1 border-t border-[#b5b19f]" />
            <ToolColumn names={LEFT_B2} className="h-[155px]" />
          </div>
        </aside>

        <section className="flex min-w-0 flex-1 flex-col border-t border-[#888]">
          <div className="flex h-[37px] bg-[#fcfcf8]">
            {PIECES.map((p, i) => (
              <PieceCell key={p.name} piece={p} index={i} />
            ))}
          </div>
          <TopRuler />
          <div className="flex flex-1">
            <div className="flex w-[13px] flex-col">
              <SideRuler />
            </div>
            <div className="flex min-w-0 flex-1 flex-col border-l-[3px] border-[#999588] bg-[#fcfdf9]">
              <PatternCanvas />
            </div>
          </div>
        </section>

        <aside className="flex w-6 flex-col gap-2 pt-1 pl-0.5">
          <ToolColumn names={RIGHT_A} className="h-[191px]" />
          <ToolColumn names={RIGHT_B} className="h-[122px]" />
        </aside>
      </main>

      <StatusBar />
      <Taskbar />
    </div>
  );
}
